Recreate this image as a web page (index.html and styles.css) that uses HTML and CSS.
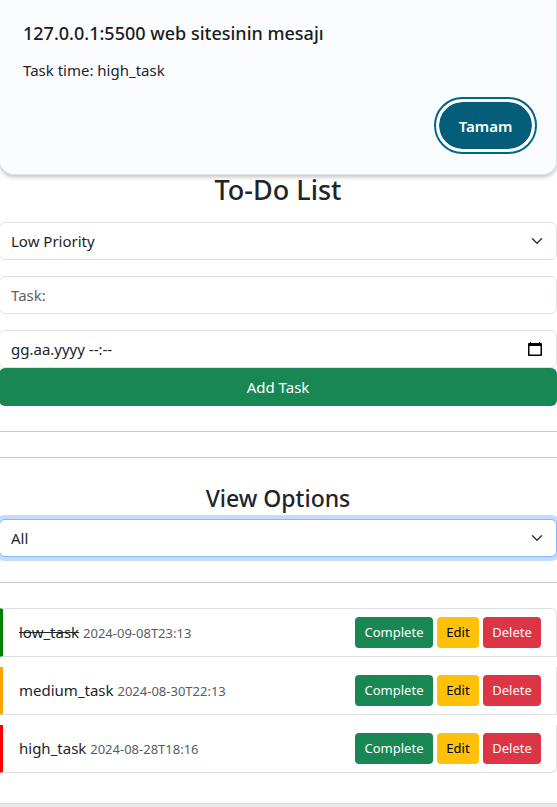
FILE: index.html
```html
<!DOCTYPE html>
<html lang="en">
<head>
<meta charset="utf-8">
<meta name="viewport" content="width=device-width, initial-scale=1">
<title>To-Do List</title>
<link rel="stylesheet" href="styles.css">
</head>
<body>
<div class="dialog" role="alertdialog" aria-labelledby="dialog-title" aria-describedby="dialog-text">
  <h1 class="dialog-title" id="dialog-title">127.0.0.1:5500 web sitesinin mesajı</h1>
  <p class="dialog-text" id="dialog-text">Task time: high_task</p>
  <div class="dialog-actions"><button class="dialog-ok" type="button">Tamam</button></div>
</div>
<main class="card">
  <h2 class="title">To-Do List</h2>
  <form class="form">
    <select class="control select" aria-label="Priority">
      <option>Low Priority</option>
      <option>Medium Priority</option>
      <option>High Priority</option>
    </select>
    <input class="control" type="text" placeholder="Task:" aria-label="Task">
    <div class="submit-group">
      <div class="control date">
        <input class="date-input" type="text" value="gg.aa.yyyy --:--" aria-label="Date and time">
        <button class="date-button" type="button" aria-label="Open calendar">
          <svg class="date-icon" viewBox="0 0 14 16" aria-hidden="true"><path d="M2 1h1v1h8V1h1v1h1a1 1 0 0 1 1 1v11a1 1 0 0 1-1 1H1a1 1 0 0 1-1-1V3a1 1 0 0 1 1-1h1zM1.500 5v8.500h11V5z" fill="#000" fill-rule="evenodd"/></svg>
        </button>
      </div>
      <button class="add" type="button">Add Task</button>
    </div>
  </form>
  <hr class="rule">
  <hr class="rule">
  <h3 class="subtitle">View Options</h3>
  <select class="control select focused" aria-label="View options">
    <option>All</option>
    <option>Completed</option>
    <option>Pending</option>
  </select>
  <hr class="rule">
  <ul class="tasks">
    <li class="task low">
      <span class="label"><s>low_task</s> <small class="time">2024-09-08T23:13</small></span>
      <span class="actions"><button class="btn complete" type="button">Complete</button><button class="btn edit" type="button">Edit</button><button class="btn delete" type="button">Delete</button></span>
    </li>
    <li class="task medium">
      <span class="label">medium_task <small class="time">2024-08-30T22:13</small></span>
      <span class="actions"><button class="btn complete" type="button">Complete</button><button class="btn edit" type="button">Edit</button><button class="btn delete" type="button">Delete</button></span>
    </li>
    <li class="task high">
      <span class="label">high_task <small class="time">2024-08-28T18:16</small></span>
      <span class="actions"><button class="btn complete" type="button">Complete</button><button class="btn edit" type="button">Edit</button><button class="btn delete" type="button">Delete</button></span>
    </li>
  </ul>
</main>
</body>
</html>
```
FILE: styles.css
```css
* { box-sizing: border-box; }

body {
  margin: 0;
  min-height: 100vh;
  overflow-x: hidden;
  background: #e9ecef;
  color: #212529;
  font: 15px/24px "Noto Sans", "Open Sans", sans-serif;
}

button, input, select { font: inherit; color: inherit; }

/* Browser message shown over the page */
.dialog {
  position: absolute;
  top: 0;
  left: 0;
  right: 0;
  padding: 20px 19px 20px 23px;
  background: #fbfcff;
  border: 1px solid #dfe6ea;
  border-width: 0 1px 1px 0;
  border-radius: 0 0 14px 14px;
  box-shadow: 0 2px 4px rgba(0, 0, 0, 0.25);
}
.dialog-title {
  margin: 0 0 12px;
  font-size: 18px;
  line-height: 26px;
  font-weight: 500;
  color: #191c1e;
}
.dialog-text { margin: 0 0 15px; }
.dialog-actions { display: flex; justify-content: flex-end; }
.dialog-ok {
  min-width: 103px;
  height: 57px;
  padding: 0 15px;
  border: 5px solid #fff;
  border-radius: 29px;
  background: #045d79 padding-box;
  color: #fff;
  font-weight: 600;
  outline: 2px solid #00668a;
  outline-offset: -2px;
}

.card {
  margin-left: -1px;
  padding: 173px 0 30px;
  background: #fff;
  border-bottom: 1px solid #d8dcdf;
}
.title, .subtitle { margin: 0; text-align: center; font-weight: 500; }
.title { padding-bottom: 15px; font-size: 27px; line-height: 34px; }
.subtitle { padding-bottom: 6px; font-size: 23px; line-height: 30px; }

.form { display: grid; gap: 16px; }
.control {
  display: block;
  width: 100%;
  height: 38px;
  margin: 0;
  padding: 0 11px;
  border: 1px solid #dee2e6;
  border-radius: 6px;
  background: #fff;
  outline: 0;
}
.control::placeholder { color: #5c6269; opacity: 1; }
.select {
  appearance: none;
  background: #fff url("data:image/svg+xml,%3Csvg xmlns='http://www.w3.org/2000/svg' viewBox='0 0 16 16'%3E%3Cpath fill='none' stroke='%23343a40' stroke-linecap='round' stroke-linejoin='round' stroke-width='2' d='m2 5 6 6 6-6'/%3E%3C/svg%3E") no-repeat right 11px center / 16px 12px;
}
.focused {
  position: relative;
  border-color: #86b7fe;
  box-shadow: 0 0 0 4px #c2dbfe;
}
.date { display: flex; align-items: center; }
.date-input { flex: 1; min-width: 0; padding: 0; border: 0; background: none; outline: 0; }
.date-button { display: flex; padding: 0 3px; border: 0; background: none; }
.date-icon { width: 14px; height: 16px; }
.add {
  display: block;
  width: 100%;
  height: 38px;
  border: 0;
  border-radius: 6px;
  background: #198754;
  color: #fff;
}

.rule { margin: 25px 0; border: 0; border-top: 1px solid #c7c8c9; }

.tasks { display: grid; gap: 10px; margin: 0; padding: 0; list-style: none; }
.task {
  display: flex;
  align-items: center;
  justify-content: space-between;
  padding: 8px 15px 8px 16px;
  border: 1px solid #dee2e6;
  border-left: 4px solid;
}
.task + .task { border-top: 0; }
.task:first-child { border-top-right-radius: 6px; }
.task:last-child { border-bottom-right-radius: 6px; }
.low { border-left-color: green; }
.medium { border-left-color: orange; }
.high { border-left-color: red; }
.time { font-size: 13px; color: #585d62; }
.actions { display: flex; gap: 4px; }
.btn {
  height: 31px;
  padding: 0 8px;
  border: 0;
  border-radius: 4px;
  font-size: 13px;
  line-height: 21px;
}
.complete { min-width: 78px; background: #198754; color: #fff; }
.edit { min-width: 42px; background: #ffc107; color: #000; }
.delete { min-width: 58px; background: #dc3545; color: #fff; }
```
